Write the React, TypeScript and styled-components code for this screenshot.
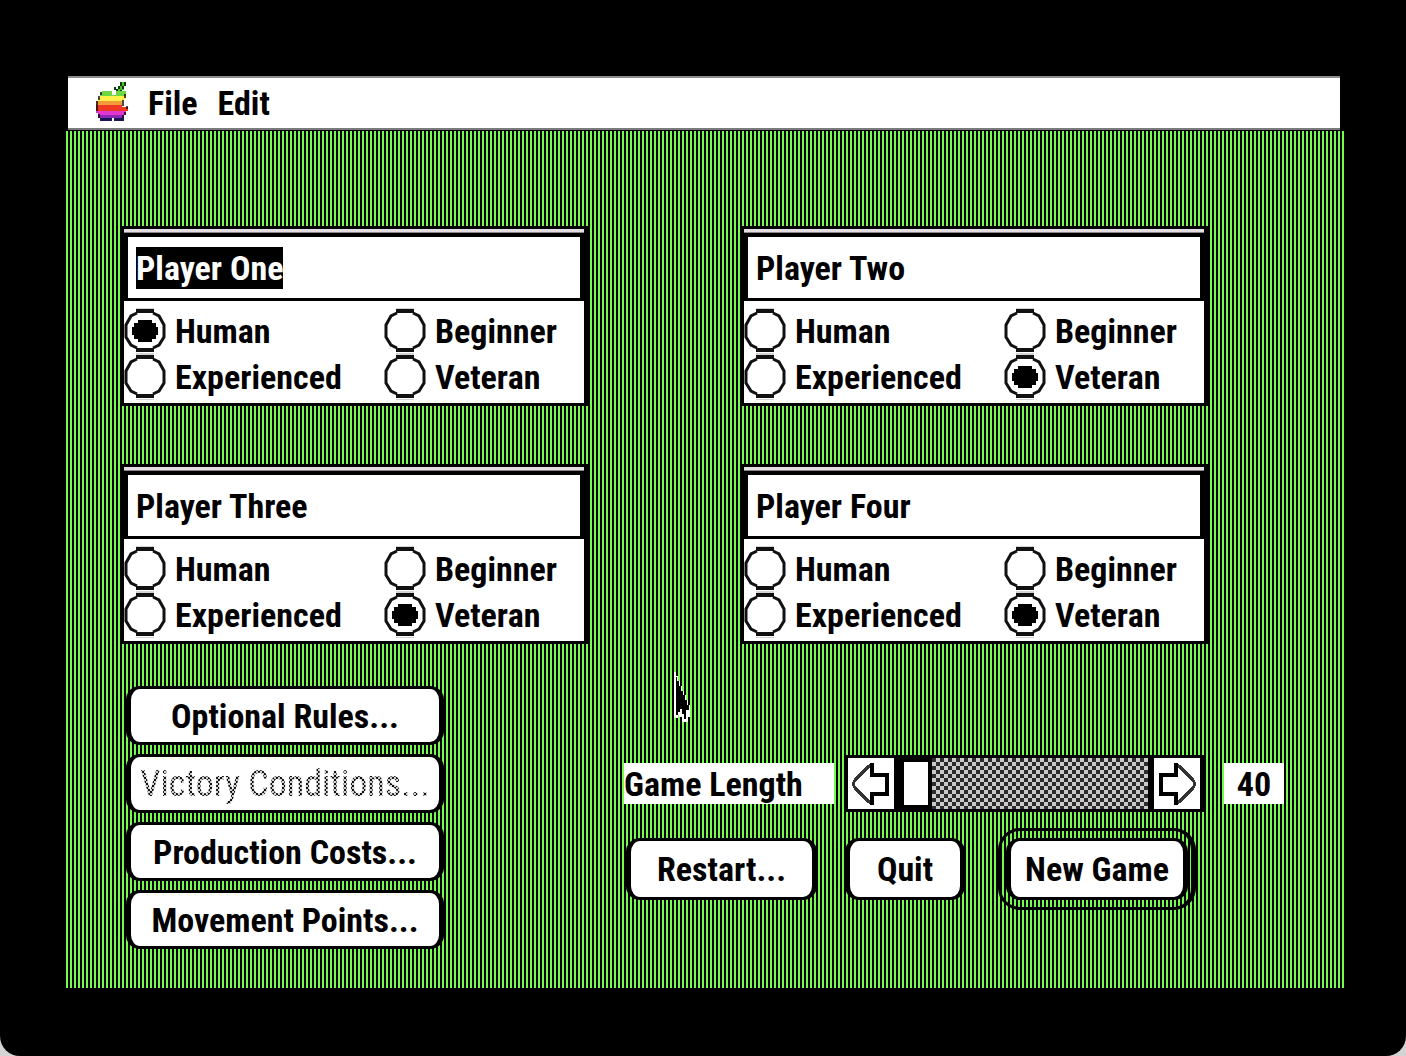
import React, { useState } from "react";
import styled, { createGlobalStyle, css } from "styled-components";

const GREEN = "#74fb4c";

const GlobalStyle = createGlobalStyle`
  * { box-sizing: border-box; }
  body { margin: 0; background: #d4d4d4; }
  body, button, input {
    font-family: "Roboto Condensed", "Liberation Sans", sans-serif;
    font-size: 34px;
    line-height: 42px;
    font-weight: 700;
    color: #000;
  }
`;

const Monitor = styled.div`
  min-height: 100vh;
  display: flex;
  flex-direction: column;
  padding: 76px 62px 68px 66px;
  background: #000;
  border-radius: 0 0 20px 20px;
`;

const MenuBar = styled.nav`
  display: flex;
  align-items: center;
  gap: 20px;
  height: 54px;
  margin: 0 4px 1px 2px;
  padding-left: 28px;
  background: #fff;
  border-top: 2px solid #8c8c8c;
  border-bottom: 2px solid #7a7a7a;
`;

const MenuButton = styled.button`
  padding: 0;
  border: 0;
  background: none;
`;

const AppleIcon = styled.svg`
  display: block;
  margin-right: -4px;
`;

const Desktop = styled.main`
  position: relative;
  flex: 1;
  padding: 95px 55px 38px;
  background: repeating-linear-gradient(90deg, ${GREEN} 0 2px, #000 2px 4px);
`;

const Players = styled.div`
  display: grid;
  grid-template-columns: repeat(2, minmax(0, 467px));
  column-gap: 153px;
  row-gap: 58px;
`;

const Panel = styled.fieldset`
  min-width: 0;
  margin: 0;
  padding: 0;
  border: solid #000;
  border-width: 3px 4px 3px 3px;
  background: #fff;
`;

const PanelStrip = styled.div`
  height: 4px;
  background: #e4dde4;
  border-bottom: 1px solid #8a838a;
`;

const NameField = styled.div`
  display: flex;
  align-items: center;
  height: 68px;
  padding: 0 8px;
  border: 4px solid #000;
  border-bottom-width: 3px;
`;

const NameInput = styled.input<{ $selected: boolean }>`
  field-sizing: content;
  height: 42px;
  max-width: 100%;
  padding: 0;
  border: 0;
  outline: 0;
  color: ${(p) => (p.$selected ? "#fff" : "#000")};
  background: ${(p) => (p.$selected ? "#000" : "#fff")};
`;

const Skills = styled.div`
  display: grid;
  grid-template-columns: 260px minmax(0, 1fr);
  grid-auto-rows: 46px;
  padding: 7px 0 3px;
`;

const Option = styled.label`
  position: relative;
  display: flex;
  align-items: center;
  gap: 9px;
`;

const RadioInput = styled.input`
  position: absolute;
  width: 42px;
  height: 44px;
  margin: 0;
  opacity: 0;
`;

const RadioMark = styled.svg`
  display: block;
  flex: none;
`;

const Controls = styled.div`
  display: flex;
  align-items: flex-start;
  gap: 180px;
  margin: 42px 0 0 5px;
`;

const RuleButtons = styled.div`
  display: flex;
  flex-direction: column;
  gap: 9px;
  width: 318px;
`;

const PushButton = styled.button<{ $width?: number; $tall?: boolean }>`
  width: ${(p) => (p.$width ? `${p.$width}px` : "100%")};
  height: ${(p) => (p.$tall ? 62 : 59)}px;
  padding: 0;
  border: solid #000;
  border-width: 3px 5px;
  border-radius: 14px;
  background: #fff;
  text-align: center;
  white-space: nowrap;

  &:disabled {
    font-size: 36px;
    font-weight: 400;
  }
`;

const Dithered = styled.span`
  color: #666;
  -webkit-text-fill-color: transparent;
  background: repeating-conic-gradient(#111 0 25%, #d0d0d0 0 50%) 0 0 / 4px 4px;
  background-clip: text;
`;

const DefaultRing = styled.div`
  padding: 7px 3px 7px 5px;
  border: solid #000;
  border-width: 3px 5px 3px 3px;
  border-radius: 22px;
`;

const GameControls = styled.div`
  display: flex;
  flex-direction: column;
  gap: 16px;
  margin-top: 69px;
`;

const LengthRow = styled.div`
  display: flex;
  align-items: center;
`;

const plate = css`
  height: 41px;
  line-height: 42px;
  background: #fff;
`;

const LengthLabel = styled.label`
  ${plate}
  width: 210px;
  margin-right: 12px;
`;

const LengthValue = styled.output`
  ${plate}
  width: 60px;
  margin-left: 20px;
  text-align: center;
`;

const ScrollBar = styled.div`
  display: flex;
  width: 358px;
  height: 57px;
  border: solid #000;
  border-width: 3px 4px 3px 2px;
`;

const ArrowButton = styled.button`
  display: grid;
  place-items: center;
  flex: none;
  width: 46px;
  padding: 0;
  border: 0;
  background: #fff;
`;

const Slider = styled.input`
  flex: 1;
  min-width: 0;
  height: 51px;
  margin: 0;
  appearance: none;
  border: solid #000;
  border-width: 0 6px 0 2px;
  background: repeating-conic-gradient(#2c2c2c 0 25%, #cacaca 0 50%) 0 0 / 8px 8px;

  &::-webkit-slider-thumb {
    appearance: none;
    width: 36px;
    height: 51px;
    border: solid #000;
    border-width: 4px 4px 4px 8px;
    background: #fff;
  }
`;

const ActionRow = styled.div`
  display: flex;
  align-items: center;
  padding-left: 2px;
`;

const Spacer = styled.div<{ $width: number }>`
  width: ${(p) => p.$width}px;
`;

const Pointer = styled.svg`
  position: absolute;
  left: 608px;
  top: 541px;
  pointer-events: none;
`;

const levels = ["Human", "Beginner", "Experienced", "Veteran"];

function Radio({ name, label, checked, onPick }: { name: string; label: string; checked: boolean; onPick: () => void }) {
  return (
    <Option>
      <RadioInput type="radio" name={name} checked={checked} onChange={onPick} />
      <RadioMark width="42" height="46" viewBox="0 0 42 46">
        <path d="M12 3H30M12 42H30" stroke="#111" strokeWidth="4" />
        <path d="M12 47H30M12 -1H30" stroke="#aaa" strokeWidth="3" />
        <path d="M13 5L7 8L2 17V29L7 37L13 40M29 5L35 8L40 17V29L35 37L29 40" fill="none" stroke="#111" strokeWidth="3" />
        {checked && <path d="M14 12H28V15H32V19H34V27H32V31H28V34H14V31H10V27H8V19H10V15H14Z" fill="#000" />}
      </RadioMark>
      {label}
    </Option>
  );
}

function Player({ id, name, initial, selected = false }: { id: string; name: string; initial: string; selected?: boolean }) {
  const [level, setLevel] = useState(initial);
  return (
    <Panel aria-label={name}>
      <PanelStrip />
      <NameField>
        <NameInput aria-label="Player name" defaultValue={name} $selected={selected} />
      </NameField>
      <Skills>
        {levels.map((l) => (
          <Radio key={l} name={id} label={l} checked={level === l} onPick={() => setLevel(l)} />
        ))}
      </Skills>
    </Panel>
  );
}

function Apple() {
  return (
    <AppleIcon width="36" height="44" viewBox="0 0 36 44" shapeRendering="crispEdges">
      <path d="M24 1H30V5H28V9H26V12H20V9H22V5H24Z" fill="#48c52c" />
      <path d="M24 1H26V5H24ZM22 5H24V8H22ZM20 8H22V12H20ZM28 1H30V5H28ZM26 5H28V8H26ZM24 9H26V12H24ZM18 6H20V9H18Z" fill="#0f330a" />
      <path d="M6 10H16V14H20V10H30V16H4V12H6Z" fill="#6bd843" />
      <path d="M4 15H30V18H28V20H2V17H4Z" fill="#fff04a" />
      <path d="M2 20H26V24H0V20Z" fill="#f39a3b" />
      <path d="M0 24H26V26H32V30H0Z" fill="#ee3823" />
      <path d="M0 30H30V34H2V32H0Z" fill="#e236d0" />
      <path d="M2 34H28V37H2Z" fill="#8a28b5" />
      <path d="M4 37H16V40H4ZM18 37H28V40H18Z" fill="#191454" />
      <path d="M4 11H6V14H4ZM2 15H4V19H2ZM0 20H2V30H0ZM2 33H4V37H2ZM28 13H30V17H28ZM26 19H28V25H26ZM30 25H32V28H30ZM28 31H30V34H28ZM26 34H28V37H26Z" fill="#000" fillOpacity="0.7" />
    </AppleIcon>
  );
}

function Arrow({ right = false }: { right?: boolean }) {
  return (
    <svg width="46" height="51" viewBox="0 0 46 51">
      <g transform={right ? "matrix(-1 0 0 1 46 0)" : undefined} shapeRendering="crispEdges" fill="none" stroke="#000">
        <path d="M25 6L21 8L7 22L5 26L7 30L21 44L25 46" strokeWidth="3" stroke="#333" />
        <path d="M24 5V17H39V36H24V47" strokeWidth="4" />
      </g>
    </svg>
  );
}

export default function App() {
  const [length, setLength] = useState(40);
  return (
    <>
      <GlobalStyle />
      <Monitor>
        <MenuBar>
          <Apple />
          <MenuButton>File</MenuButton>
          <MenuButton>Edit</MenuButton>
        </MenuBar>
        <Desktop>
          <Players>
            <Player id="p1" name="Player One" initial="Human" selected />
            <Player id="p2" name="Player Two" initial="Veteran" />
            <Player id="p3" name="Player Three" initial="Veteran" />
            <Player id="p4" name="Player Four" initial="Veteran" />
          </Players>
          <Controls>
            <RuleButtons>
              <PushButton>Optional Rules...</PushButton>
              <PushButton disabled>
                <Dithered>Victory Conditions...</Dithered>
              </PushButton>
              <PushButton>Production Costs...</PushButton>
              <PushButton>Movement Points...</PushButton>
            </RuleButtons>
            <GameControls>
              <LengthRow>
                <LengthLabel htmlFor="length">Game Length</LengthLabel>
                <ScrollBar>
                  <ArrowButton aria-label="Shorter" onClick={() => setLength(Math.max(40, length - 1))}>
                    <Arrow />
                  </ArrowButton>
                  <Slider id="length" type="range" min={40} max={400} value={length} onChange={(e) => setLength(Number(e.target.value))} />
                  <ArrowButton aria-label="Longer" onClick={() => setLength(Math.min(400, length + 1))}>
                    <Arrow right />
                  </ArrowButton>
                </ScrollBar>
                <LengthValue htmlFor="length">{length}</LengthValue>
              </LengthRow>
              <ActionRow>
                <PushButton $width={191} $tall>Restart...</PushButton>
                <Spacer $width={28} />
                <PushButton $width={120} $tall>Quit</PushButton>
                <Spacer $width={33} />
                <DefaultRing>
                  <PushButton $width={182} $tall>New Game</PushButton>
                </DefaultRing>
              </ActionRow>
            </GameControls>
          </Controls>
          <Pointer width="18" height="52" viewBox="0 0 18 52" shapeRendering="crispEdges">
            <path d="M0 0H2V4H4V9H6V14H8V19H10V23H12V28H14V33H16V45H14V50H8V45H5V43H4V46H0Z" fill="#fff" />
            <path d="M2 5H3V9H5V14H7V19H9V23H11V28H13V33H15V38H12V47H10V42H8V37H6V40H4V43H2Z" fill="#000" />
          </Pointer>
        </Desktop>
      </Monitor>
    </>
  );
}
